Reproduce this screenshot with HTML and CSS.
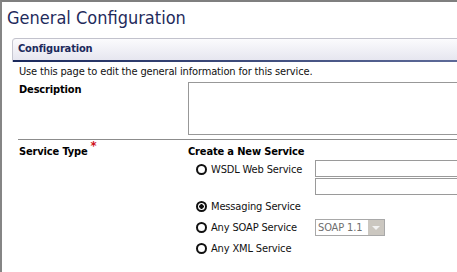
FILE: index.html
```html
<!DOCTYPE html>
<html lang="en">
  <head>
    <meta charset="UTF-8" />
    <title>General Configuration</title>
    <link rel="stylesheet" href="styles.css">
  </head>
  <body>
    <div class="frame">
      <h1 class="page-title">General Configuration</h1>
      <div class="panel">
        <div class="panel__head">Configuration</div>
        <div class="panel__body">
          <p class="panel__intro">Use this page to edit the general information for this service.</p>

          <div class="field">
            <label class="field__label" for="desc">Description</label>
            <textarea class="field__textarea" id="desc"></textarea>
          </div>

          <div class="field field--sep">
            <div class="field__label">Service Type<span class="required">*</span></div>
            <div class="service">
              <div class="service__title">Create a New Service</div>
              <div class="service__grid">
                <label class="option"><input class="option__radio" type="radio" name="stype" /> WSDL Web Service</label>
                <div class="service__inputs">
                  <input class="text-input" type="text" />
                  <input class="text-input" type="text" />
                </div>

                <label class="option"><input class="option__radio" type="radio" name="stype" checked /> Messaging Service</label>
                <div></div>

                <label class="option"><input class="option__radio" type="radio" name="stype" /> Any SOAP Service</label>
                <div class="service__cell">
                  <div class="select">
                    <span class="select__value">SOAP 1.1</span>
                    <span class="select__btn"></span>
                  </div>
                </div>

                <label class="option"><input class="option__radio" type="radio" name="stype" /> Any XML Service</label>
                <div></div>
              </div>
            </div>
          </div>
        </div>
      </div>
    </div>
  </body>
</html>
```

FILE: styles.css
```css
* {
  box-sizing: border-box;
}
body {
  margin: 0;
  overflow: hidden;
  font-family: "DejaVu Sans Condensed", "DejaVu Sans", sans-serif;
  font-size: 11px;
  line-height: 13px;
  letter-spacing: -0.15px;
  color: #111;
  background: #fff;
}
.frame {
  border-top: 2px solid #7f7f7f;
  border-left: 2px solid #858585;
  min-height: 272px;
  width: 100%;
  overflow: hidden;
}
.page-title {
  margin: 0 0 9px;
  padding: 5px 0 0 5px;
  font-size: 18px;
  line-height: 22px;
  font-weight: normal;
  letter-spacing: 0;
  color: #1f2b5c;
}
.panel {
  margin-left: 10px;
}
.panel__head {
  border-top: 1px solid #c2c2cc;
  border-left: 1px solid #c6c6d0;
  border-top-left-radius: 4px;
  padding: 3px 0 7px 5px;
  font-weight: bold;
  color: #1c2a5c;
  background:
    linear-gradient(90deg, #1b295c, #5d6a98) bottom / 100% 2px no-repeat,
    linear-gradient(#fbfbfd, #e4e4ee);
}
.panel__body {
  padding: 3px 0 0 7px;
}
.panel__intro {
  margin: 0 0 4px;
}
.field {
  display: grid;
  grid-template-columns: 169px 1fr;
}
.field__label {
  padding-top: 1px;
  font-weight: bold;
  color: #000;
}
.field__textarea {
  display: block;
  width: 300px;
  height: 53px;
  margin: 0;
  border: 1px solid #989898;
  resize: none;
}
.field--sep {
  margin: 4px 0 0 -1px;
  padding: 5px 0 0 1px;
  border-top: 1px solid #8c8c8c;
}
.field--sep .field__label {
  padding-top: 0;
}
.required {
  color: #d0101a;
  font-size: 13px;
  vertical-align: 5px;
  margin-left: 3px;
  line-height: 0;
}
.service__title {
  font-weight: bold;
  color: #000;
  margin-bottom: 1px;
}
.service__grid {
  display: grid;
  grid-template-columns: 127px 300px;
}
.option {
  display: flex;
  align-items: center;
  height: 21px;
  padding-left: 8px;
  color: #111;
}
.option__radio {
  appearance: none;
  -webkit-appearance: none;
  width: 11px;
  height: 11px;
  margin: 0 4px 0 0;
  border: 2px solid #111;
  border-radius: 50%;
  background: #fff;
}
.option__radio:checked {
  background: radial-gradient(circle, #111 0 2px, #fff 2.5px);
}
.service__inputs {
  display: flex;
  flex-direction: column;
  gap: 1px;
  padding: 1px 0;
}
.text-input {
  display: block;
  width: 300px;
  height: 17px;
  margin: 0;
  border: 1px solid #9a9a9a;
}
.service__cell {
  display: flex;
  align-items: center;
}
.select {
  display: flex;
  align-items: center;
  width: 70px;
  height: 17px;
  border: 1px solid #a8a8a8;
  color: #6e6e6e;
}
.select__value {
  flex: 1;
  padding-left: 2px;
}
.select__btn {
  width: 16px;
  height: 15px;
  background: #cbc7c0;
  display: flex;
  align-items: center;
  justify-content: center;
}
.select__btn::before {
  content: "";
  border-left: 4px solid transparent;
  border-right: 4px solid transparent;
  border-top: 4px solid #f2f2f2;
}
```
